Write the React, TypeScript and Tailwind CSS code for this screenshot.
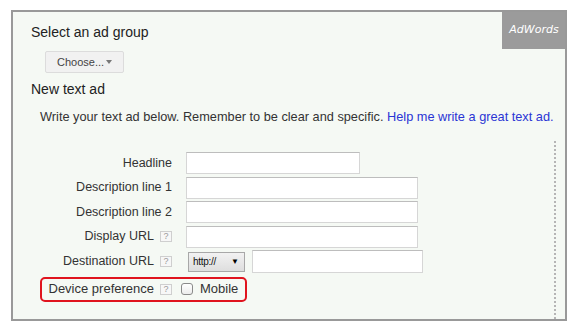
import React from 'react'

const font = { fontFamily: '"Liberation Sans", Arial, sans-serif' }

function Help() {
  return (
    <span className="ml-[6px] flex h-[11px] w-[12px] items-center justify-center border border-[#cfcfcf] bg-[#f7f7f7] text-[9px] leading-none text-[#9a9a9a]">
      ?
    </span>
  )
}

function TextInput({ width }: { width: string }) {
  return <div className={`h-[22px] ${width} border border-[#d6d6d6] border-t-[#bdbdbd] bg-white`} />
}

type Row = {
  label: string
  help?: boolean
  field: React.ReactNode
}

const rows: Row[] = [
  { label: 'Headline', field: <TextInput width="w-[174px]" /> },
  { label: 'Description line 1', field: <TextInput width="w-[232px]" /> },
  { label: 'Description line 2', field: <TextInput width="w-[232px]" /> },
  { label: 'Display URL', help: true, field: <TextInput width="w-[232px]" /> },
  {
    label: 'Destination URL',
    help: true,
    field: (
      <div className="flex items-center">
        <div className="ml-[2px] flex h-[20px] w-[57px] items-center justify-between border border-[#a8a8a8] bg-gradient-to-b from-[#f2f2f2] to-[#dedede] pl-[4px] pr-[5px]">
          <span className="text-[10px] tracking-[-0.3px] text-[#111]">http://</span>
          <span className="text-[8px] text-black">▼</span>
        </div>
        <div className="ml-[7px] h-[23px] w-[171px] border border-[#d6d6d6] border-t-[#bdbdbd] bg-white" />
      </div>
    )
  }
]

export default function App() {
  return (
    <div className="h-[333px] w-[578px] overflow-hidden bg-white pl-[11px] pt-[10px]" style={font}>
      <div className="relative flex h-[311px] w-[556px] flex-col border-2 border-[#999] bg-[#f5f9f4] text-[#333]">
        <div
          className="absolute right-0 top-0 flex h-[37px] w-[63px] items-center justify-center bg-[#9b9b9b] pl-[1px] text-[11px] italic text-white"
          style={{ fontFamily: '"DejaVu Sans", sans-serif' }}
        >
          AdWords
        </div>

        <div className="pl-[18px] pt-[12px]">
          <div className="text-[14px] leading-[16px] text-[#222]">Select an ad group</div>
          <div className="ml-[14px] mt-[11px] flex h-[22px] w-[79px] items-center justify-between rounded-[2px] border border-[#dcdcdc] bg-[#f1f1f1] pl-[11px] pr-[11px] text-[11px] text-[#444]">
            <span>Choose...</span>
            <span className="h-0 w-0 border-x-[3px] border-t-[4px] border-x-transparent border-t-[#777]" />
          </div>
          <div className="mt-[8px] text-[14px] leading-[16px] text-[#222]">New text ad</div>
          <p className="ml-[9px] mt-[12px] text-[12.75px] leading-[15px] text-[#333]">
            Write your text ad below. Remember to be clear and specific.{' '}
            <a className="text-[#2a35d4]">Help me write a great text ad.</a>
          </p>
        </div>

        <div className="mt-[17px] flex flex-1">
          <div className="flex w-[541px] flex-col gap-[2.5px] pl-[27px] pt-[11px] text-[12.5px] text-[#333]">
            {rows.map((row) => (
              <div key={row.label} className="flex items-center">
                <div className="flex w-[132px] items-center justify-end">
                  <span>{row.label}</span>
                  {row.help && <Help />}
                </div>
                <div className="ml-[14px]">{row.field}</div>
              </div>
            ))}
            <div className="mt-[1px] flex h-[25px] w-fit items-center rounded-[5px] border-2 border-[#e0141e] pr-[7px]">
              <div className="flex w-[130px] items-center justify-end">
                <span className="text-[13px]">Device preference</span>
                <Help />
              </div>
              <span className="ml-[9px] h-[12px] w-[12px] rounded-[3px] border border-[#8a8a8a] bg-gradient-to-b from-white to-[#ececec]" />
              <span className="ml-[7px] text-[13px]">Mobile</span>
            </div>
          </div>
          <div className="w-[11px] border-l-2 border-dotted border-[#b5b5b5]" />
        </div>
      </div>
    </div>
  )
}
